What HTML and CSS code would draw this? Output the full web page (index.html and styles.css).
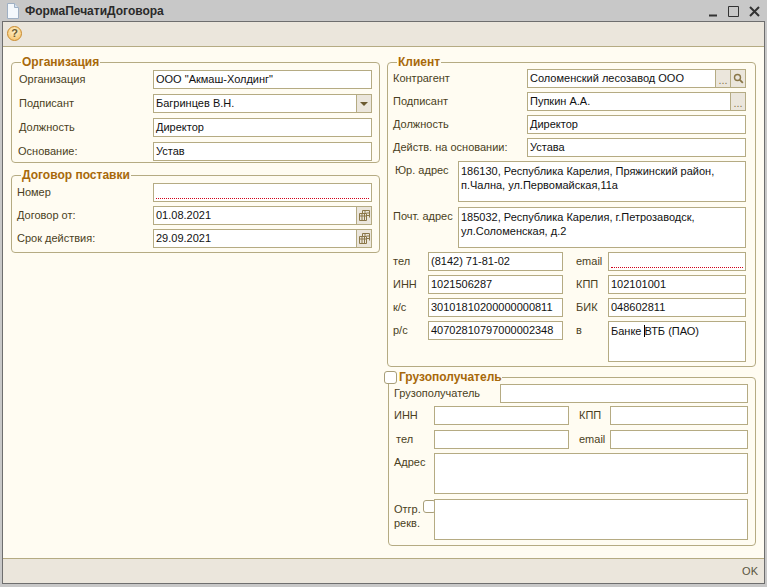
FILE: index.html
```html
<!DOCTYPE html>
<html lang="ru">
<head>
    <meta charset="UTF-8">
    <title>ФормаПечатиДоговора</title>
    <link rel="stylesheet" href="styles.css">
</head>
<body>

    <!-- Title bar -->
    <div class="titlebar">
        <svg class="doc-icon" width="12" height="16" viewBox="0 0 12 16">
            <path d="M.5.5h7l4 4v11H.5z" fill="#f4f8fc" stroke="#9fb0c4"/>
            <path d="M7.5.5v4h4" fill="#d5e0ec" stroke="#9fb0c4"/>
        </svg>
        <span class="title-text">ФормаПечатиДоговора</span>
        <div class="win-buttons">
            <svg width="10" height="12" viewBox="0 0 10 12"><path d="M1 10.5h8" stroke="#333" stroke-width="2"/></svg>
            <svg width="11" height="12" viewBox="0 0 11 12"><path d="M.5 1.5h10v10H.5z" fill="none" stroke="#333"/></svg>
            <svg width="11" height="12" viewBox="0 0 11 12"><path d="M1 2l9 9M10 2l-9 9" stroke="#333" stroke-width="2"/></svg>
        </div>
    </div>

    <div class="window">
        <!-- Toolbar -->
        <div class="toolbar">
            <span class="help-btn">?</span>
        </div>

        <div class="content">
            <!-- Left column -->
            <div class="column">
                <fieldset class="group org-group">
                    <legend>Организация</legend>
                    <div class="rows rows-left">
                        <div class="row col-left"><label>Организация</label><div class="field">ООО "Акмаш-Холдинг"</div></div>
                        <div class="row col-left"><label>Подписант</label><div class="field with-btn">Багринцев В.Н.<span class="field-btn"><i class="arrow"></i></span></div></div>
                        <div class="row col-left"><label>Должность</label><div class="field">Директор</div></div>
                        <div class="row col-left"><label class="shift">Основание:</label><div class="field">Устав</div></div>
                    </div>
                </fieldset>

                <fieldset class="group contract-group">
                    <legend>Договор поставки</legend>
                    <div class="rows rows-contract">
                        <div class="row col-left"><label>Номер</label><div class="field required"></div></div>
                        <div class="row col-left"><label>Договор от:</label><div class="field with-btn">01.08.2021<span class="field-btn"><svg width="11" height="11" viewBox="0 0 11 11"><path d="M3.5.5h7v7M.5 3.5h7v7h-7zM.5 6h7M3 3.5v7M5.5 3.5v7M3.5.5v3M6 .5v3M7.5 3h3M7.5 5.5h3" fill="none" stroke="#8a7748"/></svg></span></div></div>
                        <div class="row col-left"><label>Срок действия:</label><div class="field with-btn">29.09.2021<span class="field-btn"><svg width="11" height="11" viewBox="0 0 11 11"><path d="M3.5.5h7v7M.5 3.5h7v7h-7zM.5 6h7M3 3.5v7M5.5 3.5v7M3.5.5v3M6 .5v3M7.5 3h3M7.5 5.5h3" fill="none" stroke="#8a7748"/></svg></span></div></div>
                    </div>
                </fieldset>
            </div>

            <!-- Right column -->
            <div class="column">
                <fieldset class="group client-group">
                    <legend>Клиент</legend>
                    <div class="rows">
                        <div class="row col-client"><label>Контрагент</label><div class="field with-btn">Соломенский лесозавод ООО<span class="field-btn dots">...</span><span class="field-btn"><svg width="11" height="11" viewBox="0 0 11 11"><circle cx="4.5" cy="4.5" r="3" fill="none" stroke="#8a7748" stroke-width="1.4"/><path d="M6.8 6.8l3 3" stroke="#8a7748" stroke-width="1.8"/></svg></span></div></div>
                        <div class="row col-client"><label>Подписант</label><div class="field with-btn">Пупкин А.А.<span class="field-btn dots">...</span></div></div>
                        <div class="row col-client"><label>Должность</label><div class="field">Директор</div></div>
                        <div class="row col-client"><label>Действ. на основании:</label><div class="field">Устава</div></div>

                        <div class="row col-address"><label class="indent">Юр. адрес</label><div class="field area">186130, Республика Карелия, Пряжинский район,<br>п.Чална, ул.Первомайская,11а</div></div>
                        <div class="row col-address next"><label>Почт. адрес</label><div class="field area">185032, Республика Карелия, г.Петрозаводск,<br>ул.Соломенская, д.2</div></div>

                        <div class="row col-pair"><label>тел</label><div class="field">(8142) 71-81-02</div><label>email</label><div class="field required"></div></div>
                        <div class="row col-pair"><label>ИНН</label><div class="field">1021506287</div><label>КПП</label><div class="field">102101001</div></div>
                        <div class="row col-pair"><label>к/с</label><div class="field">30101810200000000811</div><label>БИК</label><div class="field">048602811</div></div>
                        <div class="row col-pair"><label>р/с</label><div class="field">40702810797000002348</div><label>в</label><div class="field area">Банке <span class="caret">ВТБ</span> (ПАО)</div></div>
                    </div>
                </fieldset>

                <fieldset class="group consignee-group">
                    <legend><span class="checkbox"></span>Грузополучатель</legend>
                    <div class="rows">
                        <div class="row col-consignee"><label>Грузополучатель</label><div class="field"></div></div>
                        <div class="row col-pair2 tight"><label>ИНН</label><div class="field"></div><label>КПП</label><div class="field"></div></div>
                        <div class="row col-pair2 next"><label class="indent">тел</label><div class="field"></div><label>email</label><div class="field"></div></div>
                        <div class="row col-wide"><label>Адрес</label><div class="field area"></div></div>
                        <div class="row col-wide next"><label class="two-line">Отгр.<br>рекв.</label><span class="checkbox small"></span><div class="field area"></div></div>
                    </div>
                </fieldset>
            </div>
        </div>

        <!-- Footer -->
        <div class="footer">OK</div>
    </div>
</body>
</html>
```

FILE: styles.css
```css
* {
    box-sizing: border-box;
}

html, body {
    height: 100%;
}

body {
    margin: 0;
    display: flex;
    flex-direction: column;
    overflow: hidden;
    background-color: #c8c8c8;
    font-family: "Liberation Sans", Arial, sans-serif;
    font-size: 11px;
    color: #111;
}

.titlebar {
    height: 21px;
    flex: none;
    display: flex;
    align-items: center;
    padding: 0 7px;
}

.doc-icon {
    margin-right: 6px;
}

.title-text {
    font-size: 12px;
    font-weight: bold;
    color: #2a2a2a;
}

.win-buttons {
    margin-left: auto;
    display: flex;
    gap: 10px;
}

.window {
    height: 563px;
    flex: none;
    margin: 0 2px;
    border: 1px solid #6e6e6e;
    display: flex;
    flex-direction: column;
    background-color: #fffcf2;
}

.toolbar {
    height: 25px;
    flex: none;
    padding: 4px;
    background-color: #ebe6dc;
    border-bottom: 1px solid #b5ab83;
}

.help-btn {
    display: block;
    width: 15px;
    height: 15px;
    border-radius: 50%;
    border: 1px solid #c98a2c;
    background: radial-gradient(circle at 50% 35%, #fff3cf, #f5bd5e);
    color: #6b5a30;
    font-size: 11px;
    font-weight: bold;
    line-height: 13px;
    text-align: center;
}

.content {
    flex: 1;
    display: flex;
    gap: 7px;
    padding: 8px 0 0 8px;
}

.column {
    width: 369px;
    flex: none;
}

.group {
    margin: 0;
    padding: 0;
    min-width: 0;
    border: 1px solid #b5ab83;
    border-radius: 4px;
}

.group legend {
    padding: 0 1px;
    height: 14px;
    font-size: 12px;
    font-weight: bold;
    line-height: 14px;
    color: #a8690a;
}

.org-group {
    height: 108px;
    padding: 1px 7px 0 7px;
}

.org-group legend {
    margin-left: 2px;
}

.contract-group {
    height: 85px;
    margin-top: 5px;
    padding: 1px 7px 0 5px;
}

.contract-group legend {
    margin-left: 4px;
}

.client-group {
    height: 312px;
    padding: 0 9px 0 5px;
}

.client-group legend {
    margin-left: 4px;
}

.consignee-group {
    height: 176px;
    margin: 3px 0 0 1px;
    padding: 0 7px 0 5px;
}

.consignee-group legend {
    margin-left: -10px;
    padding: 0;
    display: flex;
    align-items: center;
    gap: 2px;
}

.rows {
    display: flex;
    flex-direction: column;
    gap: 4px;
}

.rows-left {
    gap: 5px;
}

.rows-contract {
    gap: 4px;
}

.next {
    margin-top: 1px;
}

.tight {
    margin-top: -1px;
}

.row {
    display: grid;
    align-items: start;
}

.row label {
    line-height: 19px;
    color: #4a3f22;
    white-space: nowrap;
}

.indent {
    padding-left: 2px;
}

.shift {
    margin-left: -1px;
}

.row .two-line {
    line-height: 14px;
    padding-top: 3px;
}

.col-left {
    grid-template-columns: 134px 219px;
}

.rows-contract .col-left {
    grid-template-columns: 136px 219px;
}

.col-client {
    grid-template-columns: 134px 219px;
}

.col-address {
    grid-template-columns: 65px 288px;
}

.col-pair {
    grid-template-columns: 35px 135px 45px 138px;
}

.col-pair label:nth-of-type(2) {
    padding-left: 13px;
}

.col-consignee {
    grid-template-columns: 106px 248px;
}

.col-pair2 {
    grid-template-columns: 40px 135px 41px 138px;
}

.col-pair2 label:nth-of-type(2) {
    padding-left: 10px;
}

.col-wide {
    grid-template-columns: 40px 314px;
    position: relative;
}

.field {
    position: relative;
    height: 19px;
    padding: 0 2px;
    border: 1px solid #b5ab83;
    background-color: #fff;
    line-height: 17px;
    white-space: nowrap;
    overflow: hidden;
}

.field.area {
    height: 41px;
    white-space: normal;
    line-height: 14px;
    padding-top: 2px;
}

.required::after {
    content: "";
    position: absolute;
    left: 2px;
    right: 2px;
    bottom: 2px;
    border-bottom: 1px dotted #d0021b;
}

.with-btn {
    display: flex;
    padding-right: 0;
}

.field-btn {
    flex: none;
    width: 15px;
    height: 17px;
    border-left: 1px solid #b5ab83;
    background-color: #ebe6dc;
    display: flex;
    align-items: center;
    justify-content: center;
    color: #6b5a30;
}

.with-btn > .field-btn:first-of-type {
    margin-left: auto;
}

.dots {
    align-items: flex-end;
    line-height: 14px;
    color: #8a7748;
}

.arrow {
    width: 0;
    height: 0;
    border-left: 4px solid transparent;
    border-right: 4px solid transparent;
    border-top: 4px solid #6b5a30;
}

.caret {
    border-left: 1px solid #000;
    margin-left: -1px;
}

.checkbox {
    display: block;
    flex: none;
    width: 13px;
    height: 13px;
    border: 1px solid #a89e78;
    border-radius: 3px;
    background-color: #fff;
}

.checkbox.small {
    position: absolute;
    left: 29px;
    top: 1px;
}

.footer {
    height: 25px;
    flex: none;
    padding-right: 6px;
    background-color: #ebe6dc;
    border-top: 1px solid #b5ab83;
    color: #5a5540;
    line-height: 24px;
    text-align: right;
}
```
